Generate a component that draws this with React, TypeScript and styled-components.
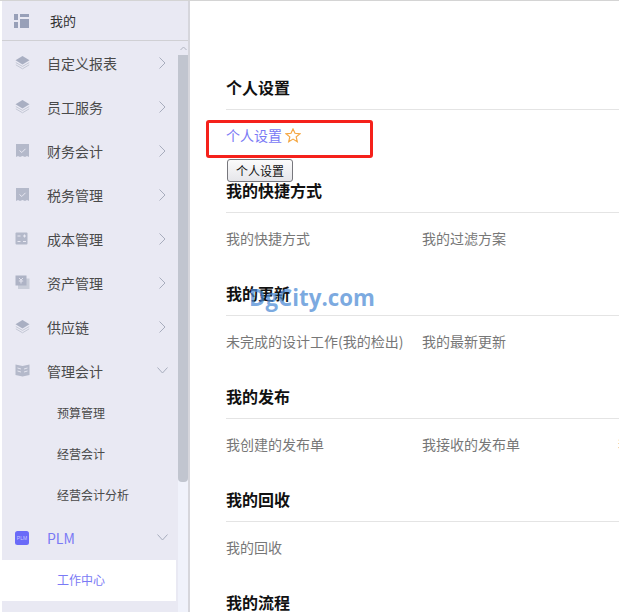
import React from 'react';
import styled, {createGlobalStyle} from 'styled-components';

const GlobalStyle = createGlobalStyle`
  html, body {
    margin: 0;
    padding: 0;
    background: #fff;
    overflow: hidden;
  }
  * {
    box-sizing: border-box;
  }
`;

const Page = styled.div`
  position: relative;
  display: flex;
  width: 619px;
  height: 612px;
  overflow: hidden;
  font-family: "Noto Sans CJK SC", "Liberation Sans", sans-serif;
  border-top: 1px solid #d4d4d4;
`;

const Sidebar = styled.aside`
  flex: 0 0 188px;
  margin-left: 2px;
  display: flex;
  flex-direction: column;
  background: #e9e9f3;
  border-right: 2px solid #d6d6dc;
`;

const SideHeader = styled.div`
  flex: 0 0 40px;
  display: flex;
  align-items: center;
  padding-left: 12px;
  border-bottom: 1px solid #d0d0d4;
  font-size: 13px;
  color: #333;
  span {
    margin-left: 21px;
  }
`;

const SideBody = styled.div`
  flex: 1;
  display: flex;
  min-height: 0;
`;

const Nav = styled.nav`
  flex: 0 0 174px;
  overflow: hidden;
`;

const MenuRow = styled.div<{$active?: boolean}>`
  height: 44px;
  display: flex;
  align-items: center;
  padding: 0 0 1px 13px;
  font-size: 14px;
  color: ${p => (p.$active ? '#7a7af5' : '#4a4a4a')};
`;

const MenuIcon = styled.span`
  flex: 0 0 32px;
  height: 16px;
  display: flex;
  align-items: center;
`;

const MenuLabel = styled.span`
  flex: 1;
`;

const Arrow = styled.svg<{$right?: number}>`
  margin-right: ${p => p.$right ?? 8}px;
`;

const SubRow = styled.div<{$selected?: boolean}>`
  height: 41px;
  display: flex;
  align-items: center;
  padding: 0 0 3px 55px;
  font-size: 12px;
  color: ${p => (p.$selected ? '#7a7af5' : '#4a4a4a')};
  background: ${p => (p.$selected ? '#fff' : 'transparent')};
`;

const ScrollTrack = styled.div`
  flex: 0 0 10px;
  margin-left: 2px;
  display: flex;
  flex-direction: column;
  align-items: stretch;
  background: #f0f2fb;
`;

const ScrollUp = styled.div`
  height: 14px;
  display: flex;
  align-items: center;
  justify-content: center;
  background: #e9e9f3;
`;

const ScrollThumb = styled.div`
  height: 427px;
  background: #c1c5cf;
  border-radius: 0 0 4px 4px;
`;

const Main = styled.main`
  flex: 1;
  min-width: 0;
  padding: 76px 0 0 36px;
  overflow: hidden;
`;

const Section = styled.section`
  height: 103px;
`;

const SectionTitle = styled.h3`
  margin: 0;
  height: 33px;
  line-height: 21px;
  font-size: 16px;
  font-weight: 700;
  color: #111;
  border-bottom: 1px solid #e4e4e4;
`;

const LinkRow = styled.div`
  display: flex;
  white-space: nowrap;
  padding-top: 15px;
`;

const LinkItem = styled.div<{$active?: boolean}>`
  flex: 0 0 196px;
  display: flex;
  align-items: center;
  gap: 3px;
  height: 20px;
  font-size: 14px;
  color: ${p => (p.$active ? '#7a7af5' : '#777')};
`;

const RedBox = styled.div`
  position: absolute;
  left: 206px;
  top: 119px;
  width: 167px;
  height: 38px;
  border: 3px solid #f5211b;
  border-radius: 3px;
`;

const Tip = styled.div`
  position: absolute;
  left: 227px;
  top: 158px;
  width: 66px;
  height: 23px;
  display: flex;
  align-items: center;
  justify-content: center;
  font-size: 12px;
  color: #111;
  background: linear-gradient(#fbfbfb, #e6e6ea);
  border: 1px solid #77777d;
  border-radius: 3px;
`;

const Watermark = styled.div`
  position: absolute;
  left: 249px;
  top: 283px;
  font-family: "Open Sans", "Liberation Sans", sans-serif;
  font-size: 22.3px;
  font-weight: 700;
  line-height: 28px;
  color: rgba(74, 137, 212, 0.72);
`;

const menuTop = [
  {name: '自定义报表', icon: 'stack'},
  {name: '员工服务', icon: 'stack'},
  {name: '财务会计', icon: 'check'},
  {name: '税务管理', icon: 'check'},
  {name: '成本管理', icon: 'calc'},
  {name: '资产管理', icon: 'asset'},
  {name: '供应链', icon: 'stack'},
];

const sections = [
  {title: '我的快捷方式', links: ['我的快捷方式', '我的过滤方案']},
  {title: '我的更新', links: ['未完成的设计工作(我的检出)', '我的最新更新']},
  {title: '我的发布', links: ['我创建的发布单', '我接收的发布单', '我']},
  {title: '我的回收', links: ['我的回收']},
  {title: '我的流程', links: []},
];

const ICON = '#a9afc2';

const SideIcon: React.FC<{name: string}> = ({name}) => {
  if (name === 'stack') {
    return (
      <svg width="15" height="15" viewBox="0 0 15 15">
        <path d="M7.5 1 14.5 5.2 7.5 9.4 .5 5.2z" fill={ICON}/>
        <path d="M.8 7.6 7.5 11.4 14.2 7.6M.8 9.8 7.5 13.8 14.2 9.8" fill="none" stroke="#c3c7d4" strokeWidth="1"/>
      </svg>
    );
  }
  if (name === 'check') {
    return (
      <svg width="15" height="15" viewBox="0 0 15 15">
        <path d="M1 1h13v13l-2-1-2 1-2.500-1-2.500 1-2-1-2 1z" fill="#b4b9ca"/>
        <path d="M4.500 7.500 6.800 9.500 10.500 5.800" fill="none" stroke="#e9e9f3" strokeWidth="1"/>
      </svg>
    );
  }
  if (name === 'calc') {
    return (
      <svg width="14" height="14" viewBox="0 0 14 14">
        <rect x=".5" y=".5" width="12" height="12" rx="1" fill="#b4b9ca"/>
        <path d="M2.500 4h3M8 4h3M2.500 9.500h3M8 9.500h3M9.500 2.500v3" stroke="#e9e9f3" strokeWidth="1"/>
      </svg>
    );
  }
  if (name === 'asset') {
    return (
      <svg width="15" height="15" viewBox="0 0 15 15">
        <rect x="3" y="3.500" width="11.500" height="10.500" fill="#c9cdd9"/>
        <rect x=".5" y=".5" width="11" height="10" fill="#aeb3c5"/>
        <path d="M4 3 6 5 8 3M3.800 6h4.400M6 5v3.500" fill="none" stroke="#e9e9f3" strokeWidth=".9"/>
      </svg>
    );
  }
  if (name === 'book') {
    return (
      <svg width="15" height="13" viewBox="0 0 15 13">
        <path d="M.5 .5 7.500 2 14.500 .5V11L7.500 12.500 .5 11z" fill="#b4b9ca"/>
        <path d="M2.500 4 6 5M2.500 7 6 8M9 5l3.500-1M9 8l3.500-1" stroke="#e9e9f3" strokeWidth=".9"/>
      </svg>
    );
  }
  return (
    <svg width="14" height="14" viewBox="0 0 14 14">
      <rect width="14" height="14" rx="2.500" fill="#6a6af8"/>
      <text x="7" y="9" fontSize="5" fontFamily="Liberation Sans, sans-serif" textAnchor="middle" fill="#c9c9ff">PLM</text>
    </svg>
  );
};

const ChevronRight = () => (
  <Arrow $right={10} width="7" height="12" viewBox="0 0 7 12">
    <path d="M.5 .5 6 6 .5 11.500" fill="none" stroke="#a8adbd" strokeWidth="1"/>
  </Arrow>
);

const ChevronDown = () => (
  <Arrow width="11" height="7" viewBox="0 0 11 7">
    <path d="M.5 .5 5.500 6 10.500 .5" fill="none" stroke="#a8adbd" strokeWidth="1"/>
  </Arrow>
);

const Star = () => (
  <svg width="16" height="15" viewBox="0 0 16 15">
    <path d="M8 1 10 5.300 15 5.800 11.200 8.900 12.300 13.700 8 11.100 3.700 13.700 4.800 8.900 1 5.800 6 5.300z" fill="none" stroke="#f5a742" strokeWidth="1.200"/>
  </svg>
);

export default function App() {
  return (
    <Page>
      <GlobalStyle/>
      <Sidebar>
        <SideHeader>
          <svg width="15" height="14" viewBox="0 0 15 14">
            <path d="M0 0h4v6H0zM0 8h4v6H0zM6 0h9v3H6zM6 5h9v9H6z" fill="#98a0b8"/>
          </svg>
          <span>我的</span>
        </SideHeader>
        <SideBody>
          <Nav>
            {menuTop.map(m => (
              <MenuRow key={m.name}>
                <MenuIcon><SideIcon name={m.icon}/></MenuIcon>
                <MenuLabel>{m.name}</MenuLabel>
                <ChevronRight/>
              </MenuRow>
            ))}
            <MenuRow>
              <MenuIcon><SideIcon name="book"/></MenuIcon>
              <MenuLabel>管理会计</MenuLabel>
              <ChevronDown/>
            </MenuRow>
            <SubRow>预算管理</SubRow>
            <SubRow>经营会计</SubRow>
            <SubRow>经营会计分析</SubRow>
            <MenuRow $active>
              <MenuIcon><SideIcon name="plm"/></MenuIcon>
              <MenuLabel>PLM</MenuLabel>
              <ChevronDown/>
            </MenuRow>
            <SubRow $selected>工作中心</SubRow>
          </Nav>
          <ScrollTrack>
            <ScrollUp>
              <svg width="7" height="5" viewBox="0 0 7 5">
                <path d="M.5 4 3.500 1 6.500 4" fill="none" stroke="#b0b4c0" strokeWidth="1"/>
              </svg>
            </ScrollUp>
            <ScrollThumb/>
          </ScrollTrack>
        </SideBody>
      </Sidebar>
      <Main>
        <Section>
          <SectionTitle>个人设置</SectionTitle>
          <LinkRow>
            <LinkItem $active>个人设置<Star/></LinkItem>
          </LinkRow>
        </Section>
        {sections.map(s => (
          <Section key={s.title}>
            <SectionTitle>{s.title}</SectionTitle>
            <LinkRow>
              {s.links.map(l => <LinkItem key={l}>{l}</LinkItem>)}
            </LinkRow>
          </Section>
        ))}
      </Main>
      <RedBox/>
      <Tip>个人设置</Tip>
      <Watermark>DgCity.com</Watermark>
    </Page>
  );
}
